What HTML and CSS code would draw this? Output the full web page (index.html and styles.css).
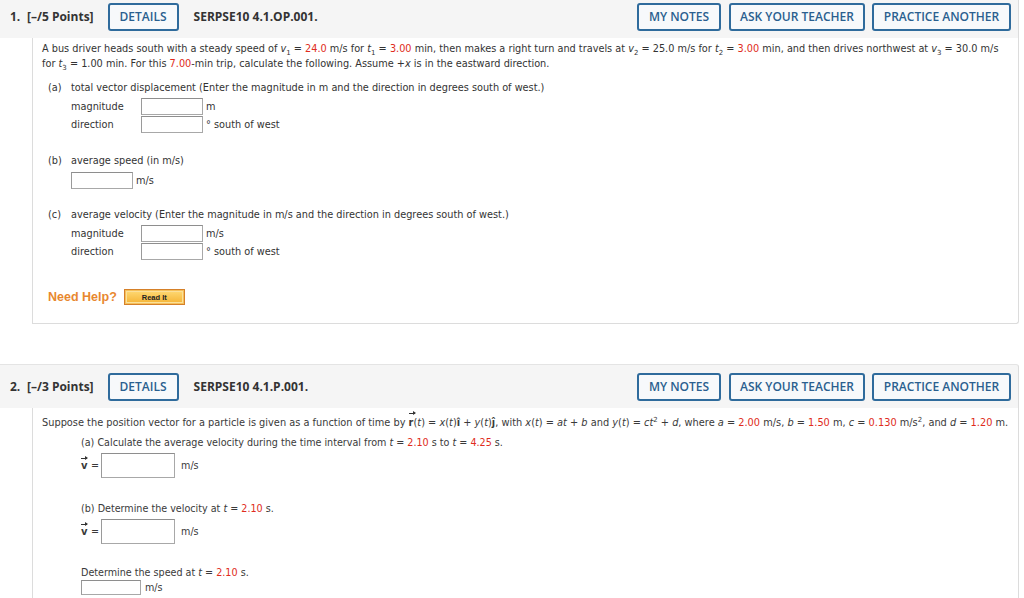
FILE: index.html
```html
<!DOCTYPE html>
<html>
<head>
<meta charset="utf-8">
<link rel="stylesheet" href="styles.css">
</head>
<body>
<div class="question q1">
  <div class="qhead">
    <span class="qnum">1.</span><span class="qpts">[–/5 Points]</span>
    <span class="btn details">DETAILS</span>
    <span class="qcode">SERPSE10 4.1.OP.001.</span>
    <span class="spacer"></span>
    <span class="btn notes">MY NOTES</span>
    <span class="btn ask">ASK YOUR TEACHER</span>
    <span class="btn practice">PRACTICE ANOTHER</span>
  </div>
  <div class="qbody body1">
    <p class="stem">A bus driver heads south with a steady speed of <i>v</i><sub>1</sub> = <span class="red">24.0</span> m/s for <i>t</i><sub>1</sub> = <span class="red">3.00</span> min, then makes a right turn and travels at <i>v</i><sub>2</sub> = 25.0 m/s for <i>t</i><sub>2</sub> = <span class="red">3.00</span> min, and then drives northwest at <i>v</i><sub>3</sub> = 30.0 m/s<br>for <i>t</i><sub>3</sub> = 1.00 min. For this <span class="red">7.00</span>-min trip, calculate the following. Assume +<i>x</i> is in the eastward direction.</p>

    <div class="part pa">
      <div class="ptitle"><span class="plabel">(a)</span>total vector displacement (Enter the magnitude in m and the direction in degrees south of west.)</div>
      <div class="prow"><span class="rlabel">magnitude</span><span class="inp"></span><span class="unit">m</span></div>
      <div class="prow"><span class="rlabel">direction</span><span class="inp"></span><span class="unit">° south of west</span></div>
    </div>

    <div class="part pb">
      <div class="ptitle"><span class="plabel">(b)</span>average speed (in m/s)</div>
      <div class="prow"><span class="inp"></span><span class="unit">m/s</span></div>
    </div>

    <div class="part pc">
      <div class="ptitle"><span class="plabel">(c)</span>average velocity (Enter the magnitude in m/s and the direction in degrees south of west.)</div>
      <div class="prow"><span class="rlabel">magnitude</span><span class="inp"></span><span class="unit">m/s</span></div>
      <div class="prow"><span class="rlabel">direction</span><span class="inp"></span><span class="unit">° south of west</span></div>
    </div>

    <div class="help">
      <span class="needhelp">Need Help?</span>
      <span class="readit"><span class="readit-in">Read It</span></span>
    </div>
  </div>
</div>

<div class="question q2">
  <div class="qhead">
    <span class="qnum">2.</span><span class="qpts">[–/3 Points]</span>
    <span class="btn details">DETAILS</span>
    <span class="qcode">SERPSE10 4.1.P.001.</span>
    <span class="spacer"></span>
    <span class="btn notes">MY NOTES</span>
    <span class="btn ask">ASK YOUR TEACHER</span>
    <span class="btn practice">PRACTICE ANOTHER</span>
  </div>
  <div class="qbody body2">
    <p class="stem2">Suppose the position vector for a particle is given as a function of time by <b class="vec vr">r</b>(<i>t</i>) = <i>x</i>(<i>t</i>)<b>î</b> + <i>y</i>(<i>t</i>)<b>ĵ</b>, with <i>x</i>(<i>t</i>) = <i>at</i> + <i>b</i> and <i>y</i>(<i>t</i>) = <i>ct</i><sup>2</sup> + <i>d</i>, where <i>a</i> = <span class="red">2.00</span> m/s, <i>b</i> = <span class="red">1.50</span> m, <i>c</i> = <span class="red">0.130</span> m/s<sup>2</sup>, and <i>d</i> = <span class="red">1.20</span> m.</p>
    <div class="sub">
      <div class="stitle">(a) Calculate the average velocity during the time interval from <i>t</i> = <span class="red">2.10</span> s to <i>t</i> = <span class="red">4.25</span> s.</div>
      <div class="vrow"><b class="vec vv">v</b><span class="eq">=</span><span class="inp big"></span><span class="unit2">m/s</span></div>
      <div class="stitle sb">(b) Determine the velocity at <i>t</i> = <span class="red">2.10</span> s.</div>
      <div class="vrow"><b class="vec vv">v</b><span class="eq">=</span><span class="inp big"></span><span class="unit2">m/s</span></div>
      <div class="stitle sc">Determine the speed at <i>t</i> = <span class="red">2.10</span> s.</div>
      <div class="srow"><span class="inp small"></span><span class="unit3">m/s</span></div>
    </div>
  </div>
</div>
</body>
</html>
```

FILE: styles.css
```css
* { box-sizing: border-box; }
html, body { margin: 0; padding: 0; background: #ffffff; }
body {
  font-family: "DejaVu Sans", Verdana, sans-serif;
  font-size: 9.74px;
  color: #333333;
  overflow: hidden;
}
.question { width: 1019px; }
.q1 { margin-top: -6px; }
.q2 { margin-top: 40px; }

.qhead {
  height: 44px;
  display: flex;
  align-items: center;
  background: #f5f5f5;
  border-top: 1px solid #e4e4e4;
  border-right: 1px solid #dcdcdc;
  border-top-right-radius: 3px;
  font-family: "Open Sans", sans-serif;
  padding-left: 10px;
  padding-right: 7px;
}
.qnum { font-weight: 700; font-size: 12px; color: #333; width: 17px; }
.qpts { font-weight: 700; font-size: 12px; color: #333; }
.btn {
  height: 28px;
  border: 2px solid #2f6b9c;
  border-radius: 3px;
  color: #2a5f8f;
  background: #f7f9fb;
  font-size: 12px;
  font-weight: 600;
  display: flex;
  align-items: center;
  justify-content: center;
  margin-left: 8px;
  white-space: nowrap;
}
.btn.details { margin-left: 14px; width: 71px; }
.btn.notes { width: 84px; }
.btn.ask { width: 136px; }
.btn.practice { width: 139px; margin-left: 7px; }
.qcode { font-weight: 700; font-size: 12px; color: #333; margin-left: 15px; }
.spacer { flex: 1; }

.qbody {
  margin-left: 32px;
  border-left: 1px solid #dcdcdc;
  border-right: 1px solid #dcdcdc;
}
.body1 {
  border-bottom: 1px solid #dcdcdc;
  border-bottom-right-radius: 3px;
  padding: 3px 0 18px 9px;
}
.stem { margin: 0; line-height: 15px; white-space: nowrap; }
.red { color: #e02b20; }
sub, sup { font-size: 7px; line-height: 0; }
sub { vertical-align: -3px; }
sup { vertical-align: 4px; }
i { font-style: italic; }

.part { padding-left: 6px; }
.ptitle { line-height: 15px; display: flex; }
.plabel { width: 23px; }
.pa { margin-top: 9px; }
.pb { margin-top: 20px; }
.pc { margin-top: 18px; }
.prow { height: 18px; display: flex; align-items: center; padding-left: 23px; }
.ptitle + .prow { margin-top: 2px; }
.pb .ptitle + .prow { margin-top: 3px; }
.rlabel { width: 70px; }
.inp {
  display: inline-block;
  width: 62px;
  height: 17px;
  border: 1px solid #a8a8a8;
  border-top-color: #8e8e8e;
  border-left-color: #9a9a9a;
  background: #fff;
}
.unit { margin-left: 3px; }

.help { display: flex; align-items: center; margin-top: 29px; padding-left: 6px; height: 16px; }
.needhelp {
  font-family: "Liberation Sans", Arial, sans-serif;
  font-weight: 700;
  font-size: 12.5px;
  color: #e8882f;
}
.readit {
  margin-left: 7px;
  width: 61px;
  height: 16px;
  border: 1px solid #d58029;
  background: #f5c05a;
  padding: 1px;
  display: flex;
}
.readit-in {
  flex: 1;
  border: 1px solid #fbe09a;
  background: linear-gradient(#fdd56d, #f6b83c);
  font-family: "Liberation Sans", Arial, sans-serif;
  font-weight: 700;
  font-size: 7.5px;
  color: #222;
  display: flex;
  align-items: center;
  justify-content: center;
}

.body2 { padding: 7px 0 20px 9px; min-height: 200px; color: #3a3a3a; }
.stem2 { margin: 0; line-height: 15px; white-space: nowrap; font-size: 9.8px; }
.vec { position: relative; display: inline-block; }
.vec::before {
  content: "";
  position: absolute;
  left: 0;
  width: 6px;
  top: -2px;
  height: 1px;
  background: #333;
}
.vec::after {
  content: "";
  position: absolute;
  left: 4px;
  top: -4px;
  border-left: 3px solid #333;
  border-top: 2.5px solid transparent;
  border-bottom: 2.5px solid transparent;
}
.sub { padding-left: 39px; font-size: 9.6px; }
.stitle { line-height: 15px; margin-top: 5px; white-space: nowrap; }
.stitle.sb { margin-top: 23px; }
.stitle.sc { margin-top: 21px; }
.vrow { display: flex; align-items: center; height: 25px; margin-top: 3px; }
.vv { font-size: 10px; width: 8px; }
.eq { margin-left: 2px; margin-right: 2px; }
.inp.big { width: 74px; height: 25px; }
.unit2 { margin-left: 6px; }
.srow { display: flex; align-items: center; height: 15px; }
.inp.small { width: 60px; height: 15px; }
.unit3 { margin-left: 4px; }
```
